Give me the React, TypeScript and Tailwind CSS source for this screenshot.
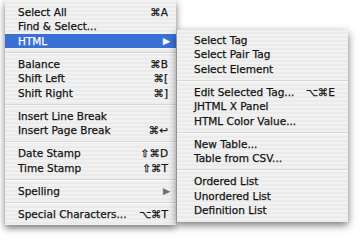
import React from 'react';

type Item =
  | { kind: 'sep' }
  | { kind: 'item'; label: string; shortcut?: string; submenu?: boolean; active?: boolean };

const mainItems: Item[] = [
  { kind: 'item', label: 'Select All', shortcut: '⌘A' },
  { kind: 'item', label: 'Find & Select...' },
  { kind: 'item', label: 'HTML', submenu: true, active: true },
  { kind: 'sep' },
  { kind: 'item', label: 'Balance', shortcut: '⌘B' },
  { kind: 'item', label: 'Shift Left', shortcut: '⌘[' },
  { kind: 'item', label: 'Shift Right', shortcut: '⌘]' },
  { kind: 'sep' },
  { kind: 'item', label: 'Insert Line Break' },
  { kind: 'item', label: 'Insert Page Break', shortcut: '⌘↩' },
  { kind: 'sep' },
  { kind: 'item', label: 'Date Stamp', shortcut: '⇧⌘D' },
  { kind: 'item', label: 'Time Stamp', shortcut: '⇧⌘T' },
  { kind: 'sep' },
  { kind: 'item', label: 'Spelling', submenu: true },
  { kind: 'sep' },
  { kind: 'item', label: 'Special Characters...', shortcut: '⌥⌘T' },
];

const htmlItems: Item[] = [
  { kind: 'item', label: 'Select Tag' },
  { kind: 'item', label: 'Select Pair Tag' },
  { kind: 'item', label: 'Select Element' },
  { kind: 'sep' },
  { kind: 'item', label: 'Edit Selected Tag...', shortcut: '⌥⌘E' },
  { kind: 'item', label: 'JHTML X Panel' },
  { kind: 'item', label: 'HTML Color Value...' },
  { kind: 'sep' },
  { kind: 'item', label: 'New Table...' },
  { kind: 'item', label: 'Table from CSV...' },
  { kind: 'sep' },
  { kind: 'item', label: 'Ordered List' },
  { kind: 'item', label: 'Unordered List' },
  { kind: 'item', label: 'Definition List' },
];

function MenuRows({ items, padLeft, padRight }: { items: Item[]; padLeft: string; padRight: string }) {
  return (
    <>
      {items.map((item, i) =>
        item.kind === 'sep' ? (
          <div key={i} className="h-[8.5px] flex flex-col justify-center">
            <div className="h-px bg-[#d6d6d6]" />
            <div className="h-px bg-[#fafafa]" />
          </div>
        ) : (
          <div
            key={i}
            className={`h-[14.5px] leading-[14.5px] flex items-center justify-between [-webkit-text-stroke:0.25px] ${padLeft} ${padRight} ${
              item.active ? 'bg-[#3a6fd3] text-white' : 'text-[#141414]'
            }`}
          >
            <span>{item.label}</span>
            {item.shortcut && <span>{item.shortcut}</span>}
            {item.submenu && (
              <span
                className={`text-[9px] mr-[-2px] ${item.active ? 'text-white' : 'text-[#707070]'}`}
              >
                ▶
              </span>
            )}
          </div>
        )
      )}
    </>
  );
}

export default function App() {
  return (
    <div
      className="relative w-[360px] h-[240px] bg-white overflow-hidden text-[10.5px]"
      style={{ fontFamily: '"DejaVu Sans", "Noto Sans", sans-serif' }}
    >
      <div className="ml-[5px] w-[171px] pt-[4.75px] pb-[4px] bg-[repeating-linear-gradient(to_bottom,#f1f1f1_0px,#f1f1f1_2px,#ebebeb_2px,#ebebeb_4px)] shadow-[0_3px_7px_rgba(0,0,0,0.55)]">
        <MenuRows items={mainItems} padLeft="pl-[13px]" padRight="pr-[8px]" />
      </div>
      <div className="absolute left-[177px] top-[30px] w-[171px] pt-[2.75px] pb-[4px] bg-[repeating-linear-gradient(to_bottom,#f1f1f1_0px,#f1f1f1_2px,#ebebeb_2px,#ebebeb_4px)] shadow-[0_3px_8px_rgba(0,0,0,0.55)]">
        <MenuRows items={htmlItems} padLeft="pl-[17px]" padRight="pr-[13px]" />
      </div>
    </div>
  );
}
